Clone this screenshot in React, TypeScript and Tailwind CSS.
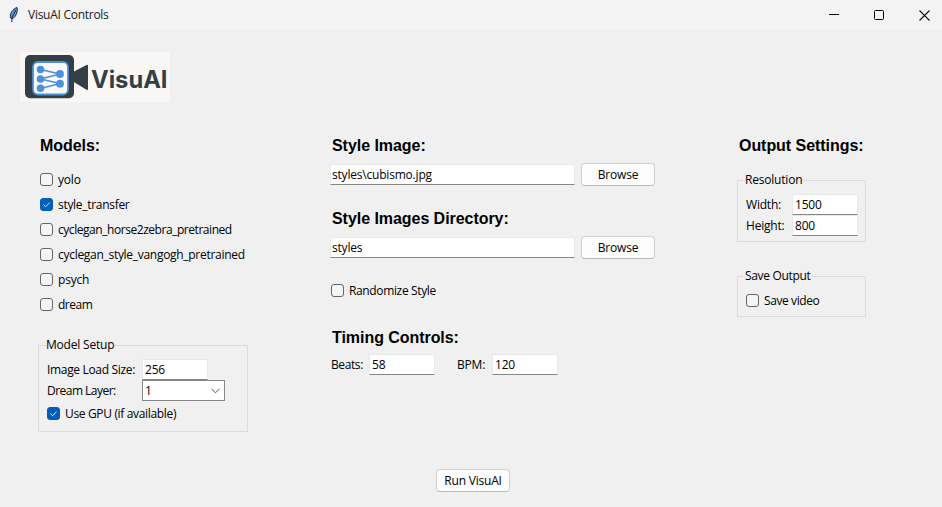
import type { ReactNode } from "react";

function Check({ label, checked = false, track = "" }: { label: string; checked?: boolean; track?: string }) {
  return (
    <label className="flex items-center gap-[5px] whitespace-nowrap">
      <svg width="13" height="13" viewBox="0 0 13 13" className="shrink-0">
        <rect
          x="0.5"
          y="0.5"
          width="12"
          height="12"
          rx="2.5"
          fill={checked ? "#005fb8" : "#f5f5f5"}
          stroke={checked ? "#005fb8" : "#666666"}
        />
        {checked && <path d="M3.5 6.8 L5.6 8.8 L9.6 4.6" fill="none" stroke="#cfe2f4" strokeWidth="1" />}
      </svg>
      <span className={track}>{label}</span>
    </label>
  );
}

function Field({ value, width, pad = "pl-[2px]" }: { value: string; width: string; pad?: string }) {
  return (
    <div className={`flex h-[21px] shrink-0 items-center border border-[#e9e9e9] border-b-[#868686] bg-white ${pad} ${width}`}>
      {value}
    </div>
  );
}

function Button({ children }: { children: ReactNode }) {
  return (
    <button className="flex h-[23px] w-[74px] items-center justify-center rounded-[4px] border border-[#d0d0d0] border-b-[#bcbcbc] bg-[#fdfdfd] whitespace-nowrap">
      {children}
    </button>
  );
}

function Heading({ children }: { children: ReactNode }) {
  return (
    <h2 className="flex h-6 items-center pt-[2px] font-['Liberation_Sans',Arial,sans-serif] text-[16px] font-bold tracking-[-0.05px] whitespace-nowrap">
      {children}
    </h2>
  );
}

function Logo() {
  return (
    <svg width="150" height="50" viewBox="0 0 150 50" className="bg-[#f9f7f5]">
      <rect x="5" y="3" width="49" height="43.2" rx="5" fill="#333f44" />
      <path d="M53 20 L66.5 12.9 Q68 12.3 68 13.8 V37 Q68 38.5 66.5 37.8 L53 29.5 Z" fill="#333f44" />
      <rect x="13" y="10" width="35" height="32.5" rx="5" fill="#faf9f8" stroke="#4a90dc" strokeWidth="1.8" />
      <path
        d="M20.5 17.5 L40 22 L20.5 27 L40 31.5 L20.5 36.5 M20.5 27 L40 22"
        stroke="#4a90dc"
        strokeWidth="1.4"
        fill="none"
      />
      <g fill="#4a90dc">
        <circle cx="20.5" cy="17.5" r="3.8" />
        <circle cx="20.5" cy="27" r="3.8" />
        <circle cx="20.5" cy="36.2" r="3.8" />
        <circle cx="40" cy="22" r="3.9" />
        <circle cx="40" cy="31.7" r="3.9" />
      </g>
      <text
        x="71"
        y="35.5"
        textLength="76.5"
        lengthAdjust="spacingAndGlyphs"
        fontFamily="Inter, sans-serif"
        fontWeight="700"
        fontSize="24"
        letterSpacing="0"
        fill="#333f44"
      >
        VisuAI
      </text>
    </svg>
  );
}

function TitleBar() {
  return (
    <header className="flex h-[30px] items-center bg-[#f3f3f3] pr-3 pl-2">
      <svg width="12" height="18" viewBox="0 0 12 18">
        <path d="M2.5 12 C1.5 8 4.5 3 9 1.5 C10 5 8 11 4.5 12.5 Z" fill="#5a9fe6" stroke="#16222e" strokeWidth="1" />
        <path d="M7.8 4 L4 11.5 L3.8 16" stroke="#111" strokeWidth="0.9" fill="none" />
      </svg>
      <span className="ml-2 tracking-[-0.27px] text-[#202020]">VisuAI Controls</span>
      <div className="ml-auto flex items-center gap-[35px]">
        <svg width="10" height="12" viewBox="0 0 10 12">
          <path d="M0 5.5 H10" stroke="#000" />
        </svg>
        <svg width="10" height="10" viewBox="0 0 10 10">
          <rect x="0.5" y="0.5" width="9" height="9" rx="1" fill="none" stroke="#000" />
        </svg>
        <svg width="11" height="11" viewBox="0 0 11 11">
          <path d="M0.5 0.5 L10.5 10.5 M10.5 0.5 L0.5 10.5" stroke="#111" strokeWidth="1.1" />
        </svg>
      </div>
    </header>
  );
}

function Models() {
  return (
    <section className="ml-[38px] w-[210px]">
      <div className="pl-[2px]">
        <Heading>Models:</Heading>
        <div className="mt-[10px] grid auto-rows-[25px]">
          <Check label="yolo" />
          <Check label="style_transfer" checked track="tracking-[-0.3px]" />
          <Check label="cyclegan_horse2zebra_pretrained" track="tracking-[-0.45px]" />
          <Check label="cyclegan_style_vangogh_pretrained" track="tracking-[-0.29px]" />
          <Check label="psych" />
          <Check label="dream" track="tracking-[-0.5px]" />
        </div>
      </div>
      <fieldset className="mt-5 h-[95px] w-[210px] border border-[#dcdcdc] pl-2">
        <legend className="-ml-px h-4 leading-4">Model Setup</legend>
        <div className="mt-[6px] flex h-[21px] items-center">
          <span className="w-[95px] tracking-[-0.33px] whitespace-nowrap">Image Load Size:</span>
          <Field value="256" width="w-[66px]" />
        </div>
        <div className="flex h-[21px] items-center">
          <span className="w-[95px] tracking-[-0.52px] whitespace-nowrap">Dream Layer:</span>
          <div className="flex h-[21px] w-[83px] items-center justify-between border border-[#868686] bg-white pr-1 pl-[2px]">
            <span>1</span>
            <svg width="9" height="6" viewBox="0 0 9 6">
              <path d="M0.5 0.8 L4.5 4.8 L8.5 0.8" fill="none" stroke="#555" />
            </svg>
          </div>
        </div>
        <div className="mt-1 flex h-[17px] items-center">
          <Check label="Use GPU (if available)" checked track="tracking-[-0.34px]" />
        </div>
      </fieldset>
    </section>
  );
}

function StyleAndTiming() {
  return (
    <section className="ml-[82px] w-[325px]">
      <div className="pl-[2px]">
        <Heading>Style Image:</Heading>
      </div>
      <div className="mt-[6px] flex items-center gap-[6px]">
        <Field value={"styles\\cubismo.jpg"} width="w-[245px]" pad="pl-px" />
        <Button>Browse</Button>
      </div>
      <div className="mt-5 pl-[2px]">
        <Heading>Style Images Directory:</Heading>
      </div>
      <div className="mt-[6px] flex items-center gap-[6px]">
        <Field value="styles" width="w-[245px]" pad="pl-px" />
        <Button>Browse</Button>
      </div>
      <div className="mt-[23px] flex h-[17px] items-center pl-[1px]">
        <Check label="Randomize Style" track="tracking-[-0.36px]" />
      </div>
      <div className="mt-[26px] pl-[2px]">
        <Heading>Timing Controls:</Heading>
      </div>
      <div className="mt-[5px] flex items-center pl-[1px]">
        <span className="w-[38px] tracking-[-0.4px]">Beats:</span>
        <Field value="58" width="w-[66px]" />
        <span className="ml-[22px] w-[35px]">BPM:</span>
        <Field value="120" width="w-[66px]" />
      </div>
    </section>
  );
}

function OutputSettings() {
  return (
    <section className="ml-[82px] w-[129px]">
      <div className="pl-[2px]">
        <Heading>Output Settings:</Heading>
      </div>
      <fieldset className="mt-[15px] h-[70px] w-[129px] border border-[#dcdcdc] pl-2">
        <legend className="-ml-px h-4 leading-4">Resolution</legend>
        <div className="mt-[6px] flex h-[21px] items-center">
          <span className="w-[46px]">Width:</span>
          <Field value="1500" width="w-[66px]" />
        </div>
        <div className="flex h-[21px] items-center">
          <span className="w-[46px]">Height:</span>
          <Field value="800" width="w-[66px]" />
        </div>
      </fieldset>
      <fieldset className="mt-[26px] h-[49px] w-[129px] border border-[#dcdcdc] pl-2">
        <legend className="-ml-px h-4 tracking-[-0.32px] leading-4">Save Output</legend>
        <div className="mt-2 flex h-[17px] items-center">
          <Check label="Save video" track="tracking-[-0.4px]" />
        </div>
      </fieldset>
    </section>
  );
}

export default function App() {
  return (
    <div className="flex h-[507px] w-[942px] flex-col overflow-hidden bg-[#f0f0f0] font-['Open_Sans','Noto_Sans',sans-serif] text-[12px] leading-4 tracking-[-0.2px] text-black">
      <TitleBar />
      <div className="mt-[22px] ml-5 h-[50px]">
        <Logo />
      </div>
      <main className="mt-[31px] flex h-[336px]">
        <Models />
        <StyleAndTiming />
        <OutputSettings />
      </main>
      <div className="ml-[436px]">
        <Button>Run VisuAI</Button>
      </div>
    </div>
  );
}
